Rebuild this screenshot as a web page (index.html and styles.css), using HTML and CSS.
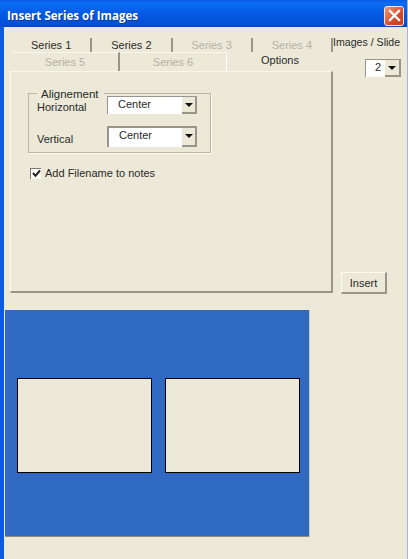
FILE: index.html

```html
<!DOCTYPE html>
<html lang="en">
<head>
  <meta charset="UTF-8" />
  <title>Insert Series of Images</title>
  <link rel="stylesheet" href="styles.css">
</head>
<body>
  <div class="window">
    <div class="titlebar">
      <span class="title">Insert Series of Images</span>
      <div class="close">
        <svg width="13" height="13" viewBox="0 0 13 13"><path d="M2 2 L11 11 M11 2 L2 11" stroke="#fff" stroke-width="2.4" stroke-linecap="square" fill="none"/></svg>
      </div>
    </div>
    <div class="content">
      <div class="top">
        <div class="tabs">
          <div class="tab-row row-one">
            <div class="tab">Series 1</div>
            <div class="tab">Series 2</div>
            <div class="tab off">Series 3</div>
            <div class="tab off">Series 4</div>
          </div>
          <div class="tab-row row-two">
            <div class="tab off">Series 5</div>
            <div class="tab off">Series 6</div>
            <div class="tab active">Options</div>
          </div>
          <div class="panel">
            <div class="group">
              <div class="legend">Alignement</div>
              <div class="group-row first">
                <label>Horizontal</label>
                <div class="select">
                  <span class="select-text">Center</span>
                  <span class="arrow"></span>
                </div>
              </div>
              <div class="group-row second">
                <label>Vertical</label>
                <div class="select tall">
                  <span class="select-text">Center</span>
                  <span class="arrow"></span>
                </div>
              </div>
            </div>
            <div class="check-row">
              <div class="checkbox">
                <svg width="9" height="9" viewBox="0 0 9 9"><path d="M1 4 L3.5 6.8 L8 1.5" stroke="#222" stroke-width="2" fill="none"/></svg>
              </div>
              <span>Add Filename to notes</span>
            </div>
          </div>
        </div>
        <div class="side">
          <div class="side-label">Images / Slide</div>
          <div class="select small">
            <span class="select-text">2</span>
            <span class="arrow"></span>
          </div>
          <button class="insert">Insert</button>
        </div>
      </div>
      <div class="preview">
        <div class="slide-box"></div>
        <div class="slide-box"></div>
      </div>
    </div>
  </div>
</body>
</html>
```

FILE: styles.css

```css
body {
  margin: 0;
  background-color: #ece9d8;
  font-family: "Liberation Sans", Arial, sans-serif;
  font-size: 11px;
  color: #2a2a2a;
}
.window {
  width: 408px;
  height: 559px;
  box-sizing: border-box;
  border-right: 1px solid #a9b4dc;
  overflow: hidden;
}
.titlebar {
  height: 27px;
  box-sizing: border-box;
  display: flex;
  align-items: center;
  justify-content: space-between;
  padding: 0 3px 0 7px;
  background: linear-gradient(to bottom, #0a5be0 0%, #0d6df5 12%, #0458e2 55%, #0450d6 90%, #0347bd 100%);
}
.title {
  margin-top: 4px;
  color: #fff;
  font-family: "Open Sans", sans-serif;
  font-weight: 700;
  font-size: 11.6px;
  text-shadow: 1px 1px 0 #0a3a9c;
}
.close {
  width: 20px;
  height: 20px;
  margin-top: 4px;
  box-sizing: border-box;
  display: flex;
  align-items: center;
  justify-content: center;
  background: linear-gradient(135deg, #ee9a7c, #d8492a 60%, #c53a1c);
  border: 1px solid #f3e6e0;
  border-radius: 3px;
}
.content {
  height: 532px;
  box-sizing: border-box;
  border-left: 4px solid #0a5ae6;
  padding-left: 1px;
}
.top {
  display: flex;
  height: 283px;
}
.tabs {
  width: 323px;
  margin: 11px 0 0 5px;
  flex-shrink: 0;
}
.tab-row {
  display: flex;
  padding-left: 2px;
  text-align: center;
}
.row-one {
  height: 14px;
  line-height: 14px;
}
.row-two {
  height: 19px;
  line-height: 18px;
}
.tab {
  flex: 1;
  border-right: 2px solid #98968a;
  box-sizing: border-box;
}
.row-two .tab {
  border-right: 1px solid #fff;
  border-top: 1px solid #f7f6ef;
}
.row-two .tab:first-child {
  border-right: 2px solid #98968a;
}
.row-two .tab.active {
  border: 0;
  line-height: 16px;
  color: #2a2a2a;
}
.tab.off {
  color: #b3b1a5;
}
.panel {
  height: 222px;
  box-sizing: border-box;
  border-left: 1px solid #fbfaf5;
  border-top: 1px solid #f7f6ef;
  border-right: 2px solid #98968a;
  border-bottom: 2px solid #98968a;
  padding: 21px 0 0 17px;
  position: relative;
}
.group {
  width: 183px;
  height: 60px;
  box-sizing: border-box;
  border: 1px solid #b9b6a6;
  box-shadow: 1px 1px 0 #fbfaf5;
  padding-left: 8px;
  position: relative;
}
.legend {
  position: absolute;
  top: -7px;
  left: 8px;
  padding: 0 5px 0 4px;
  background-color: #ece9d8;
  line-height: 14px;
  font-size: 11.5px;
}
.group-row {
  display: flex;
  align-items: flex-start;
  line-height: 14px;
}
.group-row.first {
  height: 30px;
  padding-top: 2px;
}
.group-row label {
  width: 70px;
}
.group-row.first label {
  padding-top: 4px;
}
.group-row.second label {
  padding-top: 6px;
}
.select {
  width: 90px;
  height: 18px;
  box-sizing: border-box;
  background-color: #fff;
  border-top: 1px solid #98968a;
  border-left: 1px solid #98968a;
  display: flex;
  justify-content: space-between;
  line-height: 15px;
}
.select.tall {
  height: 21px;
  border-top-width: 2px;
  border-left-width: 2px;
}
.select-text {
  padding-left: 10px;
}
.arrow {
  width: 15px;
  box-sizing: border-box;
  background-color: #ece9d8;
  border-right: 2px solid #98968a;
  border-bottom: 2px solid #98968a;
  position: relative;
}
.arrow::after {
  content: "";
  position: absolute;
  left: 3px;
  top: 6px;
  border-left: 4px solid transparent;
  border-right: 4px solid transparent;
  border-top: 4px solid #111;
}
.check-row {
  display: flex;
  align-items: center;
  gap: 4px;
  margin: 14px 0 0 2px;
}
.checkbox {
  width: 11px;
  height: 11px;
  box-sizing: border-box;
  border-top: 1px solid #7d7b6f;
  border-left: 1px solid #7d7b6f;
  background-color: #fbfaf5;
  display: flex;
  align-items: center;
  justify-content: center;
}
.side {
  width: 74px;
  display: flex;
  flex-direction: column;
  align-items: flex-start;
}
.side-label {
  margin-top: 8px;
  line-height: 14px;
  font-size: 10.6px;
  white-space: nowrap;
}
.select.small {
  width: 36px;
  height: 18px;
  margin: 10px 0 0 32px;
  border-width: 1px 0 0 1px;
}
.select.small .select-text {
  padding-left: 9px;
}
.select.small .arrow {
  width: 16px;
}
.insert {
  width: 46px;
  height: 22px;
  margin: 195px 0 0 8px;
  padding: 0;
  box-sizing: border-box;
  background-color: #ece9d8;
  border: 0;
  border-top: 1px solid #fbfaf5;
  border-left: 1px solid #fbfaf5;
  border-right: 2px solid #98968a;
  border-bottom: 2px solid #98968a;
  font-family: inherit;
  font-size: 11px;
  color: #2a2a2a;
}
.preview {
  width: 304px;
  height: 227px;
  box-sizing: border-box;
  background-color: #2f69c2;
  border-bottom: 1px solid #8f8d80;
  box-shadow: 1px 0 0 #c9c7b9;
  display: flex;
  gap: 13px;
  padding: 68px 0 0 12px;
}
.slide-box {
  width: 135px;
  height: 95px;
  box-sizing: border-box;
  background-color: #ece9d8;
  border: 1px solid #000;
}
```
